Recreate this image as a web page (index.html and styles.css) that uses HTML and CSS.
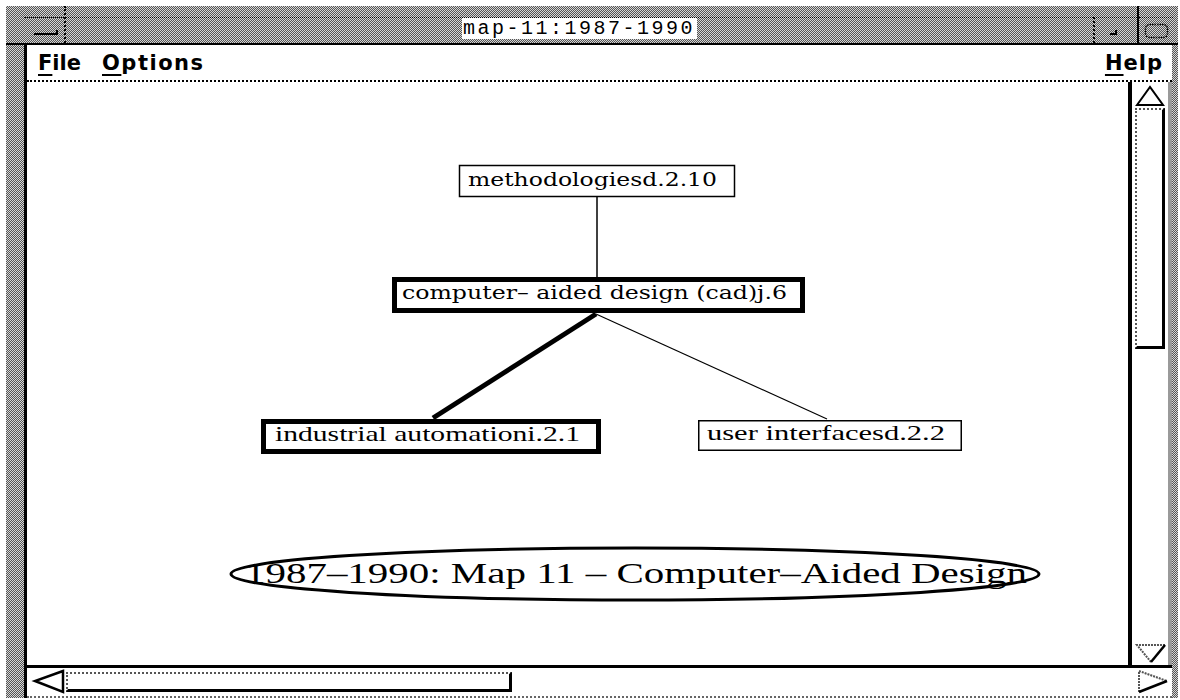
FILE: index.html
```html
<!doctype html>
<html lang="en">
<head>
	<meta charset="UTF-8">
	<title>map-11:1987-1990</title>
	<link rel="stylesheet" href="styles.css">
</head>
<body>
	<div class="window">
		<div class="titlebar">
			<div class="corner"></div>
			<div class="tb-cell close">
				<div class="face">
					<svg width="40" height="24"><path d="M10 15h23v-4" stroke="#000" stroke-width="2" fill="none"/></svg>
				</div>
			</div>
			<div class="tb-cell title-cell">
				<div class="face"><span class="title">map-11:1987-1990</span></div>
			</div>
			<div class="tb-cell min">
				<div class="face">
					<svg width="42" height="24"><path d="M15 15h6v-4" stroke="#000" stroke-width="2" fill="none"/></svg>
				</div>
			</div>
			<div class="tb-cell max">
				<div class="face">
					<svg width="34" height="24"><rect x="6.5" y="5.5" width="22" height="13" rx="4" fill="none" stroke="#000" stroke-width="1.5" stroke-dasharray="1.5 1"/></svg>
				</div>
			</div>
			<div class="corner-r"></div>
		</div>
		<div class="frame-body">
			<div class="side"></div>
			<div class="client">
				<div class="menubar">
					<span class="menu"><u>F</u>ile</span>
					<span class="menu wide"><u>O</u>ptions</span>
					<span class="menu help"><u>H</u>elp</span>
				</div>
				<div class="main">
					<div class="canvas">
						<svg class="diagram" width="1101" height="583" viewBox="27 82 1101 583">
							<line x1="597" y1="197" x2="597" y2="277" stroke="#000" stroke-width="1.5"/>
							<line x1="596" y1="314" x2="433" y2="418" stroke="#000" stroke-width="5"/>
							<line x1="596" y1="314" x2="827" y2="419" stroke="#000" stroke-width="1.2"/>

							<rect x="459.5" y="165.5" width="275" height="31" fill="#fff" stroke="#000" stroke-width="1.5"/>
							<text class="n-wide" x="468" y="186" textLength="249" lengthAdjust="spacingAndGlyphs">methodologiesd.2.10</text>

							<rect x="394.5" y="279.5" width="408" height="31" fill="#fff" stroke="#000" stroke-width="5"/>
							<text class="n-wide" x="402" y="299" textLength="385" lengthAdjust="spacingAndGlyphs">computer– aided design (cad)j.6</text>

							<rect x="263.5" y="421.5" width="335" height="30" fill="#fff" stroke="#000" stroke-width="5"/>
							<text class="n-times" x="275" y="441" textLength="305" lengthAdjust="spacingAndGlyphs">industrial automationi.2.1</text>

							<rect x="698.75" y="420.75" width="262.5" height="29.5" fill="#fff" stroke="#000" stroke-width="1.5"/>
							<text class="n-times" x="707" y="440" textLength="238" lengthAdjust="spacingAndGlyphs">user interfacesd.2.2</text>

							<ellipse cx="635" cy="574" rx="404" ry="26" fill="#fff" stroke="#000" stroke-width="3"/>
							<text class="caption" x="245" y="583" textLength="782" lengthAdjust="spacingAndGlyphs">1987–1990: Map 11 – Computer–Aided Design</text>
						</svg>
					</div>
					<div class="vscroll">
						<div class="v-up">
							<svg width="36" height="26"><path d="M5 23L18 5L31 23Z" fill="#fff" stroke="#000" stroke-width="2"/></svg>
						</div>
						<div class="vthumb"></div>
						<div class="v-space"></div>
						<div class="v-down">
							<svg width="36" height="22">
								<path d="M19 19L5 2H33" fill="none" stroke="#555" stroke-width="2" stroke-dasharray="2 1"/>
								<path d="M33 2L19 19" fill="none" stroke="#000" stroke-width="2.5"/>
							</svg>
						</div>
					</div>
				</div>
				<div class="hscroll">
					<div class="h-left">
						<svg width="39" height="28"><path d="M36 3L8 13L36 24Z" fill="#fff" stroke="#000" stroke-width="2.5"/></svg>
					</div>
					<div class="hthumb"></div>
					<div class="h-right">
						<svg width="40" height="28">
							<path d="M7 24V3L35 13" fill="none" stroke="#555" stroke-width="2" stroke-dasharray="2 1"/>
							<path d="M35 13L7 24" fill="none" stroke="#000" stroke-width="2.5"/>
						</svg>
					</div>
				</div>
			</div>
			<div class="side-r"></div>
		</div>
	</div>
</body>
</html>
```

FILE: styles.css
```css
*, html, body {
	margin: 0;
	padding: 0;
	box-sizing: border-box;
}

body {
	background: #fff;
	font-family: "Liberation Sans", Arial, sans-serif;
}

.window {
	margin: 6px 0 0 6px;
	width: 1172px;
	height: 692px;
	display: flex;
	flex-direction: column;
	background: repeating-conic-gradient(#555 0 25%, #d6d6d6 0 50%) 0 0 / 2px 2px;
}

/* title bar */
.titlebar {
	display: flex;
	flex: none;
	height: 39px;
	border-bottom: 2px solid #000;
}

.corner {
	width: 18px;
}

.corner-r {
	width: 5px;
}

.tb-cell {
	display: flex;
	padding-top: 11px;
}

.tb-cell .face {
	flex: 1;
	display: flex;
	align-items: center;
	justify-content: center;
	border-top: 1px dotted #000;
}

.tb-cell svg {
	display: block;
}

.close {
	width: 42px;
	border-right: 2px dotted #000;
}

.title-cell {
	flex: 1;
}

.title-cell .face {
	align-items: flex-start;
}

.title {
	height: 21px;
	padding: 0 2px 0 1px;
	background: #fff;
	font: 20px/21px "Liberation Mono", monospace;
	letter-spacing: 2.5px;
	color: #000;
}

.min {
	width: 44px;
}

.min .face {
	border-left: 2px dotted #000;
}

.max {
	width: 36px;
	border-left: 2px solid #000;
}

/* frame body */
.frame-body {
	flex: 1;
	display: flex;
	min-height: 0;
}

.side {
	width: 18px;
}

.side-r {
	width: 6px;
}

.client {
	flex: 1;
	display: flex;
	flex-direction: column;
	border-left: 3px solid #000;
}

.menubar {
	display: flex;
	align-items: center;
	gap: 21px;
	height: 37px;
	padding: 0 9px 0 11px;
	background: #fff;
	border-bottom: 2px dotted #000;
	font: bold 21px "DejaVu Sans", sans-serif;
	color: #000;
}

.menubar u {
	text-decoration-thickness: 2px;
	text-underline-offset: 4px;
}

.menubar .wide {
	letter-spacing: 1.5px;
}

.menubar .help {
	margin-left: auto;
	letter-spacing: 1px;
}

.main {
	flex: 1;
	display: flex;
	min-height: 0;
}

.canvas {
	flex: 1;
	background: #fff;
	overflow: hidden;
}

.diagram {
	display: block;
}

.n-wide {
	font: 18px "DejaVu Serif", serif;
}

.n-times {
	font: 21px "Liberation Serif", serif;
}

.caption {
	font: 29px "Liberation Serif", serif;
}

/* scrollbars */
.vscroll {
	width: 44px;
	display: flex;
	flex-direction: column;
	padding-right: 4px;
	background: #fff;
	border-left: 4px solid #000;
	box-shadow: inset -4px 0 0 #9a9a9a;
}

.vscroll svg,
.hscroll svg {
	display: block;
}

.v-up {
	height: 26px;
}

.vthumb {
	height: 241px;
	margin: 0 3px;
	border-top: 2px dotted #555;
	border-left: 2px dotted #555;
	border-right: 3px solid #000;
	border-bottom: 3px solid #000;
}

.v-space {
	flex: 1;
}

.v-down {
	height: 22px;
}

.hscroll {
	display: flex;
	align-items: center;
	height: 33px;
	background: #fff;
	border-top: 3px solid #000;
	border-bottom: 2px dotted #666;
}

.h-left {
	width: 39px;
}

.hthumb {
	width: 446px;
	height: 20px;
	border-top: 2px dotted #555;
	border-left: 2px dotted #555;
	border-right: 3px solid #000;
	border-bottom: 3px solid #000;
}

.h-right {
	margin-left: auto;
	width: 40px;
}
```
